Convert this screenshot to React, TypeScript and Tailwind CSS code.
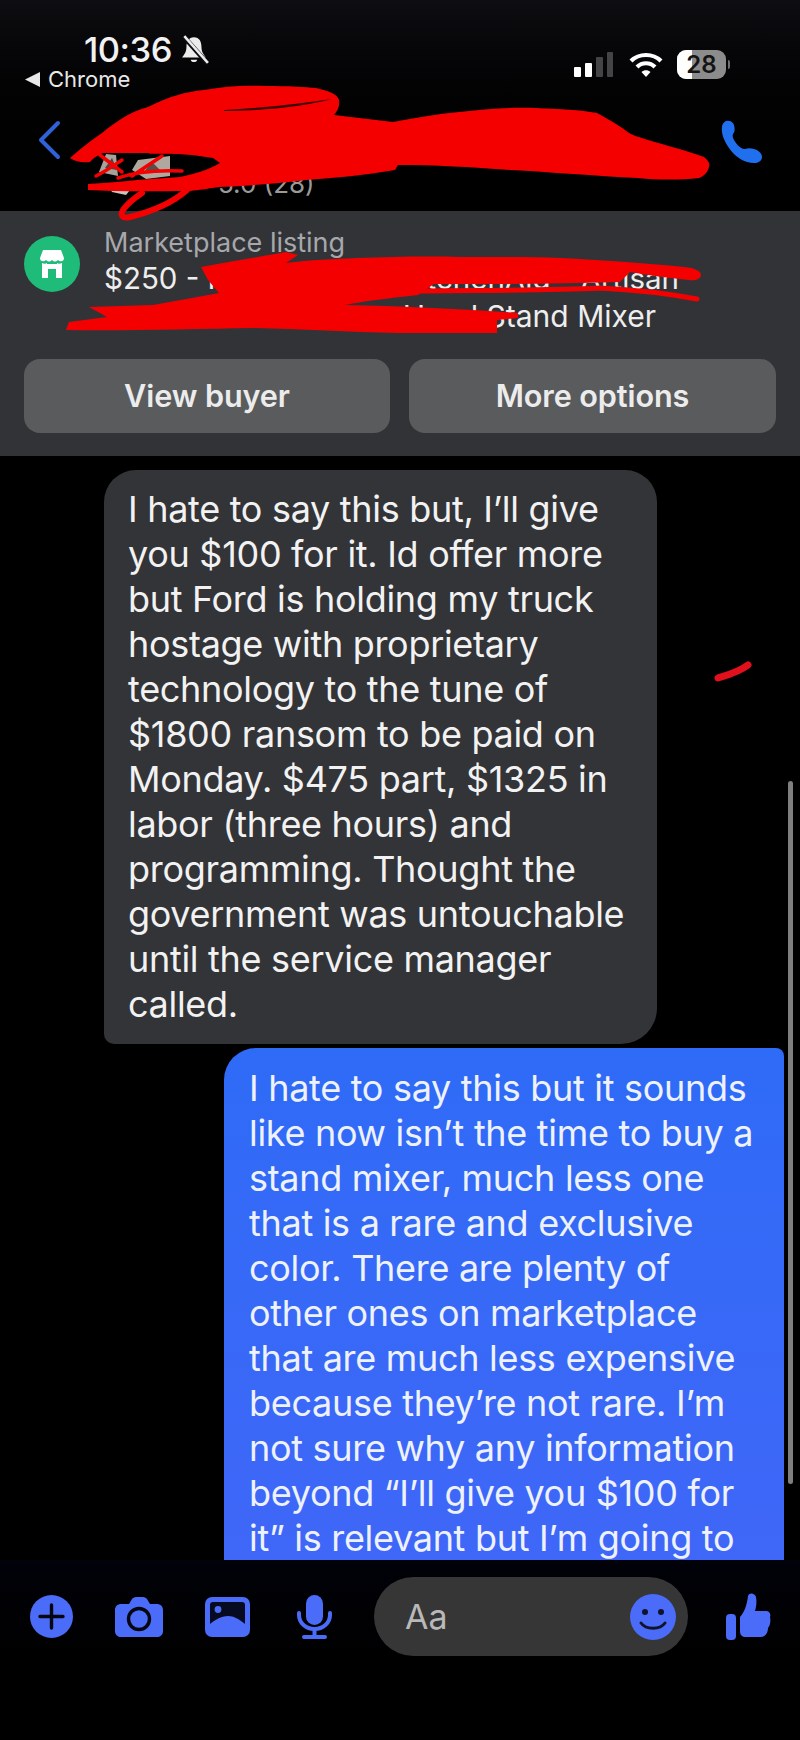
const font = "font-['Inter','Noto_Sans',sans-serif]";

const incoming = [
  "I hate to say this but, I’ll give",
  "you $100 for it. Id offer more",
  "but Ford is holding my truck",
  "hostage with proprietary",
  "technology to the tune of",
  "$1800 ransom to be paid on",
  "Monday. $475 part, $1325 in",
  "labor (three hours) and",
  "programming. Thought the",
  "government was untouchable",
  "until the service manager",
  "called.",
];

const outgoing = [
  "I hate to say this but it sounds",
  "like now isn’t the time to buy a",
  "stand mixer, much less one",
  "that is a rare and exclusive",
  "color. There are plenty of",
  "other ones on marketplace",
  "that are much less expensive",
  "because they’re not rare. I’m",
  "not sure why any information",
  "beyond “I’ll give you $100 for",
  "it” is relevant but I’m going to",
];

function Scribbles() {
  return (
    <svg className="absolute left-0 top-0 pointer-events-none" width="800" height="700" viewBox="0 0 800 700">
      <path d="M99 172 L106 154 L116 155 L118 176 Z" fill="#a8a29c" />
      <path d="M105 168 L112 158 L117 170 Z" fill="#4a4644" />
      <path d="M132 170 L138 160 L170 156 L170 176 L146 179 Z" fill="#b0a89e" />
      <path d="M144 172 L152 162 L160 170 Z" fill="#55504c" />
      <path d="M108 185 L130 190 L126 195 L112 192 Z" fill="#c9c4be" />
      <path
        fill="#f50000"
        d="M70 158 C85 145 92 140 102 133 C118 120 130 112 148 107 C170 96 185 92 204 90 C225 86 245 85 265 86 C290 86 305 87 316 88 C330 91 338 95 339 100 C340 107 337 111 334 115 L393 122 C415 118 437 114 459 112 C485 109 510 107 536 108 C560 109 580 110 597 113 C610 120 618 125 625 130 C632 136 640 137 648 140 C668 146 688 151 704 157 C709 161 710 164 709 167 C708 172 704 176 699 178 C680 180 658 180 638 178 C595 176 550 172 510 170 C470 167 435 165 398 165 L395 170 C365 175 335 178 306 180 C280 183 250 186 219 187 C205 189 200 190 190 191 C160 191 120 192 88 190 L88 184 C110 183 125 181 137 180 L180 177 C195 174 208 170 220 163 L213 158 C195 155 175 153 153 153 L103 153 C98 155 93 158 90 162 C82 163 76 162 70 158 Z"
      />
      <path d="M224 110 C260 108 300 104 332 99 C305 106 265 111 224 111 Z" fill="#3a0000" />
      <path d="M187 190 C170 205 150 212 130 217 C122 219 120 215 123 210 C127 204 133 199 142 193" fill="none" stroke="#f50000" strokeWidth="6" strokeLinecap="round" />
      <path d="M96 176 C108 170 116 164 122 160 M118 178 C135 172 160 170 182 171 M100 155 L122 172 M132 176 L162 156 M150 152 L190 152" fill="none" stroke="#f50000" strokeWidth="3.5" strokeLinecap="round" />
      <path
        fill="#f50000"
        d="M201 267 C230 262 258 257 286 252 L298 255 L286 263 C310 260 335 259 357 258 C392 257 425 256 459 257 C495 257 530 257 561 258 C600 260 645 263 684 267 C695 268 701 271 701 275 C701 279 695 281 689 280 C668 278 648 275 630 272 L620 282 C560 284 500 284 434 284 L418 295 C390 298 365 301 345 305 C400 306 460 309 518 313 L518 318 L497 320 L497 333 L398 333 C350 332 300 329 255 328 C190 329 125 331 66 330 L69 322 L107 317 L89 307 L153 305 C175 301 198 297 219 293 L208 280 Z"
      />
      <path d="M416 291 C470 290 540 291 600 288 C640 290 670 294 697 299" fill="none" stroke="#f50000" strokeWidth="5" strokeLinecap="round" />
      <path d="M718 678 C728 675 739 672 748 665" fill="none" stroke="#e0101c" strokeWidth="7" strokeLinecap="round" />
    </svg>
  );
}

function Bell() {
  return (
    <svg width="29" height="30" viewBox="0 0 27 28" fill="#ececec">
      <path d="M13 2 C8 2 6 6 6 11 C6 16 4 18 2 21 L24 21 C22 18 20 16 20 11 C20 6 18 2 13 2 Z" />
      <path d="M10 23 H16 C16 26 10 26 10 23 Z" />
      <path d="M3 1 L26 27" stroke="#0b0b0e" strokeWidth="4.4" />
      <path d="M4 1 L26 26" stroke="#ececec" strokeWidth="2.4" />
    </svg>
  );
}

function StatusRight() {
  return (
    <div className="flex items-center gap-[14px]">
      <div className="flex items-end gap-[4px] mr-[2px]">
        <div className="w-[7px] h-[10px] rounded-[1px] bg-white" />
        <div className="w-[7px] h-[14px] rounded-[1px] bg-white" />
        <div className="w-[7px] h-[20px] rounded-[1px] bg-[#444446]" />
        <div className="w-[6px] h-[25px] rounded-[1px] bg-[#444446]" />
      </div>
      <svg width="34" height="26" viewBox="0 0 34 26" fill="none" stroke="#fff" strokeWidth="4.2">
        <path d="M2 9 C10 1 24 1 32 9" />
        <path d="M8 15 C13 10 21 10 26 15" />
        <path d="M12.5 20 L17 25 L21.5 20 C19 17.5 15 17.5 12.5 20 Z" fill="#fff" stroke="none" />
      </svg>
      <div className="flex items-center gap-[2px]">
        <div className="relative w-[49px] h-[29px] rounded-[9px] overflow-hidden bg-[#8c8c8c] flex items-center justify-center">
          <div className="absolute left-0 top-0 h-full w-[15px] bg-white" />
          <span className="relative text-[24px] leading-none font-semibold text-[#141414]">28</span>
        </div>
        <div className="w-[2px] h-[9px] rounded-r-full bg-[#6f6f6f]" />
      </div>
    </div>
  );
}

function Header() {
  return (
    <div className="h-[211px] bg-gradient-to-b from-[#0e0e12] to-black flex flex-col">
      <div className="flex justify-between pt-[32px] pl-[25px] pr-[70px]">
        <div className="flex flex-col">
          <div className="flex items-center gap-[8px] pl-[59px] h-[36px]">
            <span className="text-[34.5px] leading-none font-medium text-[#f2f2f2] tracking-[-0.5px]">10:36</span>
            <Bell />
          </div>
          <div className="flex items-center gap-[8px] h-[22px]">
            <svg width="15" height="15" viewBox="0 0 15 15" fill="#e8e8e8">
              <path d="M0 7.5 L15 0 V15 Z" />
            </svg>
            <span className="text-[22px] leading-none text-[#e8e8e8]">Chrome</span>
          </div>
        </div>
        <div className="pt-[18px]">
          <StatusRight />
        </div>
      </div>
      <div className="flex justify-between items-start px-[37px] pt-[30px] relative">
        <svg width="24" height="40" viewBox="0 0 24 40" fill="none" stroke="#2f62d8" strokeWidth="4" strokeLinecap="round" strokeLinejoin="round">
          <path d="M21 3 L4 20 L21 37" />
        </svg>
        <span className="absolute left-[218px] top-[78px] text-[26px] leading-[32px] text-[#9a9a9a]">5.0 (28)</span>
        <svg width="42" height="44" viewBox="0 0 42 44" fill="#1f6fee">
          <path d="M5 1 C9 0 12 2 13 5 C14 9 14 12 12 14 C11 16 12 19 15 23 C18 27 21 29 24 29 C27 28 30 28 33 29 C37 30 41 33 41 37 C41 41 37 43 33 43 C24 43 14 37 8 28 C3 21 0 13 1 7 C1 4 3 2 5 1 Z" />
        </svg>
      </div>
    </div>
  );
}

function Listing() {
  return (
    <div className="h-[245px] bg-[#323337] flex flex-col pt-[15px] px-[24px]">
      <div className="flex gap-[24px] h-[134px]">
        <div className="w-[56px] h-[56px] mt-[10px] rounded-full bg-[#1fbb78] flex items-center justify-center shrink-0">
          <svg width="26" height="30" viewBox="0 0 26 30" fill="#fff">
            <path d="M4 1 H22 L25 9 C25 13 21 13 19 11 C17 13 15 13 13 11 C11 13 9 13 7 11 C5 13 1 13 1 9 Z" />
            <path d="M3 14 C5 15 7 15 8 14 V15 H18 V14 C19 15 21 15 23 14 V29 H17 V20 H9 V29 H3 Z" />
          </svg>
        </div>
        <div className="flex flex-col w-[575px]">
          <span className="text-[27px] leading-[33px] text-[#a6a8ac] whitespace-nowrap">Marketplace listing</span>
          <div className="flex justify-between text-[29.5px] leading-[38px] text-[#eeeeee] whitespace-nowrap">
            <span>$250 - K</span>
            <span>KitchenAid - Artisan</span>
          </div>
          <div className="flex justify-end pr-[23px] text-[30px] leading-[38px] text-[#eeeeee] whitespace-nowrap">
            <span>Head Stand Mixer</span>
          </div>
        </div>
      </div>
      <div className="flex gap-[19px] mt-[-1px]">
        <div className="w-[366px] h-[74px] rounded-[16px] bg-[#5a5b5d] flex items-center justify-center">
          <span className="text-[30.6px] font-semibold text-[#ececec] tracking-[-0.1px]">View buyer</span>
        </div>
        <div className="w-[367px] h-[74px] rounded-[16px] bg-[#5a5b5d] flex items-center justify-center">
          <span className="text-[30.6px] font-semibold text-[#ececec] tracking-[-0.1px]">More options</span>
        </div>
      </div>
    </div>
  );
}

function Messages() {
  return (
    <div className="h-[1104px] bg-black overflow-hidden flex flex-col pt-[14px] relative">
      <div className="ml-[104px] w-[553px] rounded-[32px] rounded-bl-[10px] rounded-br-[36px] bg-[#333437] pl-[24px] pt-[17px] pb-[17px] text-[36px] leading-[45px] text-[#f2f2f2] tracking-[-0.3px] whitespace-nowrap">
        {incoming.map((line) => (
          <div key={line}>{line}</div>
        ))}
      </div>
      <div className="ml-[224px] mt-[4px] w-[560px] rounded-tl-[32px] rounded-tr-[8px] bg-gradient-to-b from-[#2e6bf6] to-[#4066f8] pl-[25px] pt-[18px] pb-[40px] text-[36px] leading-[45px] text-[#eef2ff] tracking-[-0.3px] whitespace-nowrap">
        {outgoing.map((line) => (
          <div key={line}>{line}</div>
        ))}
      </div>
      <div className="absolute left-[788px] top-[325px] w-[5px] h-[703px] rounded-full bg-[#7f7f7f]" />
    </div>
  );
}

const blue = "#4a6cf8";

function Footer() {
  return (
    <div className="flex-1 bg-gradient-to-b from-[#01020a] to-black pt-[17px] pl-[30px]">
      <div className="flex items-center h-[79px]">
        <svg width="43" height="43" viewBox="0 0 43 43">
          <circle cx="21.5" cy="21.5" r="21.5" fill={blue} />
          <path d="M10 21.5 H33 M21.5 10 V33" stroke="#05060f" strokeWidth="3.4" strokeLinecap="round" />
        </svg>
        <svg className="ml-[42px]" width="48" height="40" viewBox="0 0 48 40">
          <path d="M6 7 H14 L17 2 C18 1 19 0 21 0 H28 C30 0 31 1 32 2 L35 7 H42 C45 7 48 9 48 13 V34 C48 38 45 40 42 40 H6 C3 40 0 38 0 34 V13 C0 9 3 7 6 7 Z" fill={blue} />
          <circle cx="24" cy="22" r="10.5" fill="none" stroke="#05060f" strokeWidth="3.4" />
        </svg>
        <svg className="ml-[42px]" width="45" height="40" viewBox="0 0 45 40">
          <rect width="45" height="40" rx="7" fill={blue} />
          <path d="M5 8 Q5 5 8 5 H37 Q40 5 40 8 V27 C34 22 29 19 23 19 C16 19 10 23 5 27 Z" fill="#070b22" />
          <circle cx="13" cy="12.5" r="3.4" fill={blue} />
        </svg>
        <svg className="ml-[47px]" width="35" height="44" viewBox="0 0 35 44" fill="none">
          <rect x="9" y="0" width="17" height="30" rx="8.5" fill={blue} />
          <path d="M2 18 V20 C2 28 9 34 17.5 34 C26 34 33 28 33 20 V18" stroke={blue} strokeWidth="4" strokeLinecap="round" />
          <path d="M17.5 34 V41 M7 42 H28" stroke={blue} strokeWidth="4" strokeLinecap="round" />
        </svg>
        <div className="ml-[42px] w-[314px] h-[79px] rounded-full bg-[#363636] flex items-center justify-between pl-[31px] pr-[12px]">
          <span className="text-[34px] leading-none text-[#b9b9b9]">Aa</span>
          <svg width="46" height="46" viewBox="0 0 46 46">
            <circle cx="23" cy="23" r="23" fill={blue} />
            <circle cx="15" cy="18" r="3" fill="#11132a" />
            <circle cx="31" cy="18" r="3" fill="#11132a" />
            <path d="M11 29 C16 36 30 36 35 29" fill="none" stroke="#11132a" strokeWidth="3" strokeLinecap="round" />
          </svg>
        </div>
        <svg className="ml-[38px]" width="45" height="48" viewBox="0 0 45 48" fill={blue}>
          <rect x="0" y="21" width="10" height="26" rx="4" />
          <path d="M22 3 C23 -1 29 0 30 4 C31 9 30 15 29 18 H40 C44 18 45 22 44 24 C45 28 44 33 42 35 C42 40 39 44 35 44 H20 C16 44 14 42 14 38 V24 C18 20 21 12 22 3 Z" />
        </svg>
      </div>
    </div>
  );
}

export default function App() {
  return (
    <div className={`relative w-[800px] h-[1740px] bg-black overflow-hidden flex flex-col ${font}`}>
      <Header />
      <Listing />
      <Messages />
      <Footer />
      <Scribbles />
    </div>
  );
}
